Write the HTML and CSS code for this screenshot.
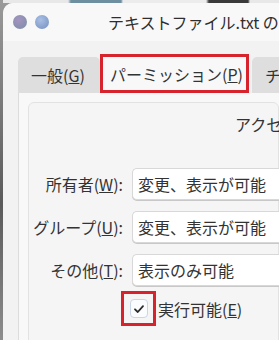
FILE: index.html
```html
<html>
    <head>
        <meta charset="utf-8">
        <link rel="stylesheet" href="styles.css">
    </head>
    <body>
        <div id="desktopTop"></div>
        <div id="window">
            <div id="titlebar">
                <span class="light light1"></span>
                <span class="light light2"></span>
                <span id="title">テキストファイル.txt の</span>
            </div>
            <div id="content">
                <div id="tabs">
                    <div class="tab tab-general">一般(<u>G</u>)</div>
                    <div class="tab tab-active">パーミッション(<u>P</u>)</div>
                    <div class="tab tab-more">チ</div>
                </div>
                <div id="tabPanel">
                    <div id="frame">
                        <div id="frameTitle">アクセ</div>
                        <div id="permGrid">
                            <div class="label">所有者(<u>W</u>):</div>
                            <div class="combo">変更、表示が可能</div>
                            <div class="label">グループ(<u>U</u>):</div>
                            <div class="combo">変更、表示が可能</div>
                            <div class="label">その他(<u>T</u>):</div>
                            <div class="combo">表示のみ可能</div>
                            <div></div>
                            <div class="checkRow">
                                <span class="checkMark">
                                    <span class="checkbox">
                                        <svg width="12" height="12" viewBox="0 0 12 12">
                                            <path d="M2 6.3 L4.8 9 L10 3.2" fill="none" stroke="#2b2b2b" stroke-width="1.8" stroke-linecap="round" stroke-linejoin="round"/>
                                        </svg>
                                    </span>
                                </span>
                                <span class="checkLabel">実行可能(<u>E</u>)</span>
                            </div>
                        </div>
                    </div>
                </div>
            </div>
        </div>
    </body>
</html>
```
FILE: styles.css
```css
body {
    margin: 0;
    width: 279px;
    height: 340px;
    overflow: hidden;
    font-family: 'Noto Sans CJK JP', 'Noto Sans', sans-serif;
    color: #333;
    background: linear-gradient(180deg, #9a9a9a, #5a5a5a 60%, #8c8c8c);
}

#desktopTop {
    height: 3px;
    margin-left: 3px;
    background: linear-gradient(90deg, #e8e8e8 0, #e8e8e8 65px, #6d8fa0 68px, #6d8fa0 118px, #ececec 120px, #ececec 203px, #3a3a3a 206px, #3a3a3a 245px, #e8e8e8 247px);
}

#window {
    margin-left: 3px;
    height: 337px;
    background: #f2f2f2;
    border-top-left-radius: 10px;
    overflow: hidden;
}

#titlebar {
    height: 38px;
    display: flex;
    align-items: center;
    padding-left: 10px;
    background: #f8f8f8;
    white-space: nowrap;
}

.light {
    width: 14px;
    height: 14px;
    border-radius: 50%;
    margin-right: 8px;
    flex-shrink: 0;
}

.light1 {
    background: radial-gradient(circle at 40% 35%, #a495c0, #8a8fb0 60%, #85a090);
}

.light2 {
    background: radial-gradient(circle at 40% 35%, #a9c0e4, #839dca 70%);
}

#title {
    margin-left: 51px;
    font-size: 16px;
    color: #2e2e2e;
}

#content {
    padding: 16px 0 0 15px;
}

#tabs {
    display: flex;
    height: 36px;
    align-items: flex-end;
}

.tab {
    flex-shrink: 0;
    height: 36px;
    box-sizing: border-box;
    display: flex;
    align-items: center;
    font-size: 16px;
    white-space: nowrap;
    background: #dedede;
    border-radius: 5px 5px 0 0;
}

.tab-general {
    width: 82px;
    padding-left: 13px;
}

.tab-active {
    height: 39px;
    width: 149px;
    padding-left: 7px;
    background: #f8f8f8;
    border: 3px solid #d6232c;
    border-radius: 0;
}

.tab-more {
    margin-left: 3px;
    padding-left: 13px;
    width: 40px;
}

#tabPanel {
    height: 300px;
    background: #f8f8f8;
    border-left: 1px solid #dcdcdc;
    padding: 9px 0 0 9px;
}

#frame {
    height: 300px;
    background: #f5f5f5;
    border: 1px solid #e2e2e2;
    border-radius: 6px;
    padding-top: 10px;
}

#frameTitle {
    font-size: 16px;
    line-height: 22px;
    padding-left: 206px;
    white-space: nowrap;
}

#permGrid {
    margin-top: 33px;
    display: grid;
    grid-template-columns: 94px 160px;
    column-gap: 9px;
    row-gap: 11px;
}

.label {
    font-size: 16px;
    line-height: 32px;
    text-align: right;
    white-space: nowrap;
}

.combo {
    height: 32px;
    box-sizing: border-box;
    background: #fff;
    border: 1px solid #d8d8d8;
    border-right: none;
    border-radius: 5px 0 0 5px;
    box-shadow: 0 1px 0 #c8c8c8;
    padding-left: 5px;
    font-size: 16px;
    line-height: 30px;
    white-space: nowrap;
}

.checkRow {
    display: flex;
    align-items: center;
    margin-left: -11px;
    margin-top: -6px;
}

.checkMark {
    width: 35px;
    height: 35px;
    box-sizing: border-box;
    border: 3px solid #d6232c;
    display: flex;
    align-items: center;
    justify-content: center;
}

.checkbox {
    width: 18px;
    height: 19px;
    box-sizing: border-box;
    border: 1px solid #c9d5e8;
    border-radius: 4px;
    background: #fbfcfe;
    display: flex;
    align-items: center;
    justify-content: center;
}

.checkLabel {
    margin-left: 2px;
    font-size: 16px;
    white-space: nowrap;
}
```
